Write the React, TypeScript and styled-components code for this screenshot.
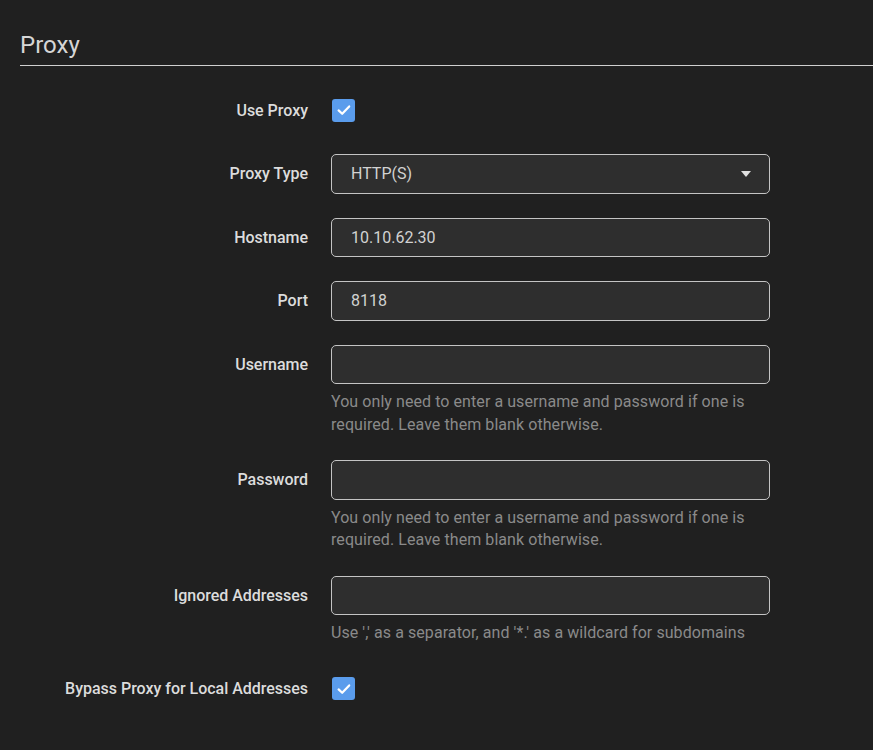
import React from "react";
import styled, { createGlobalStyle } from "styled-components";

const Global = createGlobalStyle`
  html, body { margin: 0; padding: 0; background: #202020; }
  body { font-family: Roboto, "Noto Sans", sans-serif; color: #dddddd; }
  * { box-sizing: border-box; }
`;

const Page = styled.div`
  width: 873px;
  height: 750px;
  overflow: hidden;
  background: #202020;
  padding-top: 30px;
`;

const Heading = styled.h2`
  margin: 0 0 24px 20px;
  padding: 0 0 5px 0;
  font-size: 24px;
  font-weight: 400;
  line-height: 30px;
  color: #d6d6d6;
  border-bottom: 1.5px solid #cfcfcf;
`;

const Form = styled.div`
  display: grid;
  grid-template-columns: 308px 439px;
  column-gap: 23px;
  row-gap: 24px;
`;

const Label = styled.label`
  grid-column: 1;
  justify-self: end;
  align-self: start;
  height: 39.5px;
  display: flex;
  align-items: center;
  font-size: 16px;
  font-weight: 500;
  letter-spacing: -0.02px;
  color: #dcdcdc;
`;

const Label40 = styled(Label)`
  height: 40px;
`;

const Field = styled.div`
  grid-column: 2;
  display: flex;
  flex-direction: column;
`;

const CheckField = styled(Field)`
  height: 40px;
  justify-content: center;
`;

const Input = styled.div`
  height: 39.5px;
  border: 1.5px solid #c4c4c4;
  border-radius: 5px;
  background: #2e2e2e;
  padding: 0 19px;
  display: flex;
  align-items: center;
  font-size: 16px;
  color: #d2d2d2;
`;

const Select = styled(Input)`
  justify-content: space-between;
  padding-right: 18px;
`;

const Caret = styled.span`
  width: 0;
  height: 0;
  border-left: 5.5px solid transparent;
  border-right: 5.5px solid transparent;
  border-top: 6px solid #e0e0e0;
`;

const Help = styled.div`
  margin-top: 7px;
  font-size: 16px;
  line-height: 22.5px;
  letter-spacing: 0.07px;
  color: #8a8a8a;
`;

const Box = styled.span`
  width: 23px;
  height: 23px;
  border-radius: 3px;
  background: #5a9cec;
  display: flex;
  align-items: center;
  justify-content: center;
  margin-left: 1px;
`;

const Check = () => (
  <Box>
    <svg width="18" height="18" viewBox="0 0 18 18">
      <path d="M3.6 9.4 L7.2 12.8 L14.2 5.4" fill="none" stroke="#ffffff" strokeWidth="2.2" strokeLinecap="round" strokeLinejoin="round" />
    </svg>
  </Box>
);

const help = "You only need to enter a username and password if one is required. Leave them blank otherwise.";

export default function App() {
  return (
    <Page>
      <Global />
      <Heading>Proxy</Heading>
      <Form>
        <Label40>Use Proxy</Label40>
        <CheckField><Check /></CheckField>

        <Label>Proxy Type</Label>
        <Field>
          <Select>
            <span>HTTP(S)</span>
            <Caret />
          </Select>
        </Field>

        <Label>Hostname</Label>
        <Field><Input>10.10.62.30</Input></Field>

        <Label>Port</Label>
        <Field><Input>8118</Input></Field>

        <Label>Username</Label>
        <Field>
          <Input />
          <Help>{help}</Help>
        </Field>

        <Label>Password</Label>
        <Field>
          <Input />
          <Help>{help}</Help>
        </Field>

        <Label>Ignored Addresses</Label>
        <Field>
          <Input />
          <Help>Use ',' as a separator, and '*.' as a wildcard for subdomains</Help>
        </Field>

        <Label40>Bypass Proxy for Local Addresses</Label40>
        <CheckField><Check /></CheckField>
      </Form>
    </Page>
  );
}
